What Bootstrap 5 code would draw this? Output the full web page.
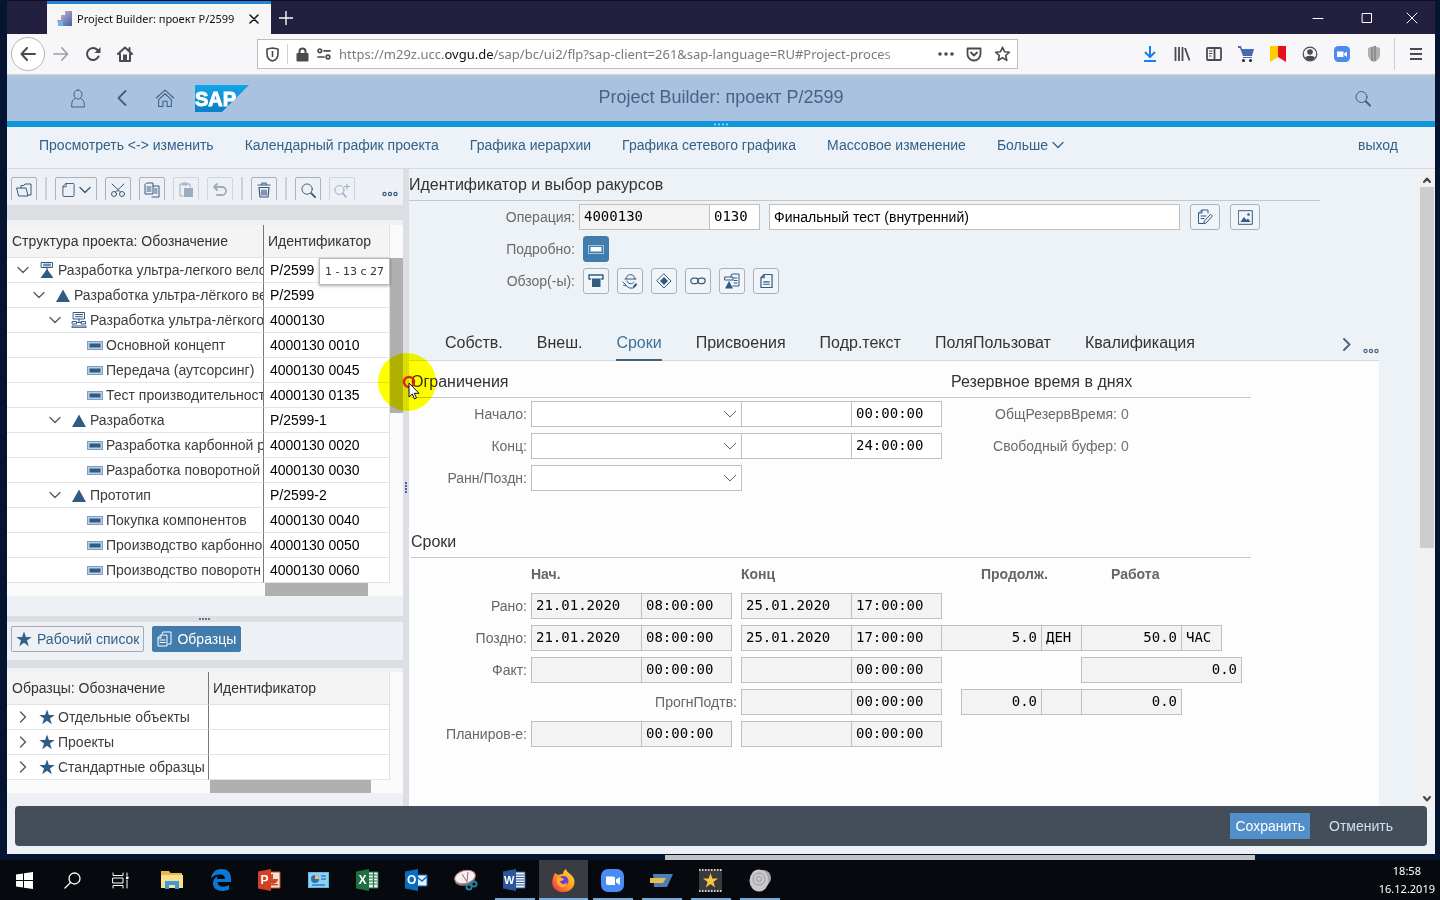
<!DOCTYPE html>
<html lang="ru">
<head>
<meta charset="utf-8">
<meta name="viewport" content="width=device-width, initial-scale=1">
<title>Project Builder: проект P/2599</title>
<link href="https://cdn.jsdelivr.net/npm/bootstrap@5.3.0/dist/css/bootstrap.min.css" rel="stylesheet">
<style>
  :root { --sap-ink: #346187; --sap-navy: #2f5b85; --sap-line: #bfbfbf; --chrome-font: "Noto Sans", "Open Sans", sans-serif; }
  body { font-family: "Liberation Sans", Arial, sans-serif; font-size: 14px; line-height: 20px; color: #333; background: #051430; }
  button, input, select { font-family: inherit; font-size: inherit; line-height: inherit; color: inherit; }
  button { background: none; border: 0; padding: 0; }
  a { text-decoration: none; color: inherit; }
  svg { display: block; flex: none; }
  .ln { fill: none; stroke: currentColor; stroke-linecap: round; stroke-linejoin: round; }

  /* browser window */
  .app-window { margin: 0 5px 6px 7px; background: #edf2f7; min-height: 0; }
  .tab-strip { height: 34px; background: #22203e; border-top: 1px solid #0d0c28; padding-left: 40px; color: #ddd; font-family: var(--chrome-font); }
  .browser-tab { width: 224px; background: #f6f6f7; border-top: 3px solid #2384d8; color: #111; font-size: 11px; padding: 0 12px 0 10px; }
  .tool-strip { height: 41px; background: #f7f6f8; color: #4a4a4f; border-bottom: 1px solid #d5d5d8; }
  .nav-round { width: 34px; height: 34px; border: 1px solid #b5b5b8; border-radius: 50%; background: #fff; }
  .url-box { width: 761px; height: 30px; border: 1px solid #bfbdc1; background: #fff; font-family: var(--chrome-font); font-size: 13px; padding: 0 6px 0 8px; }
  .url-text { color: #7a7a7e; white-space: nowrap; -webkit-mask-image: linear-gradient(90deg, #000 94%, transparent); mask-image: linear-gradient(90deg, #000 94%, transparent); }
  .url-text b { color: #111; font-weight: 400; }
  .tool-icons { padding-right: 12px; }
  .burger { border-left: 1px solid #cfcfd2; height: 32px; padding-left: 14px; margin-left: -4px; }

  /* shell */
  .shell { height: 46px; background: linear-gradient(#b3c4d6, #a9c2df 5px); color: #3b6187; }
  .shell h1 { font-size: 18px; line-height: 24px; margin: 0; padding-bottom: 2px; font-weight: 400; color: #446488; }
  .shell-line { height: 6px; background: #0d97d8; color: #7fd6fa; }
  .menu-strip { height: 42px; background: #ecf2f8; border-bottom: 1px solid #d3d9df; color: var(--sap-ink); padding: 0 37px 5px 32px; }
  .menu-links { gap: 31px; }

  /* navigation pane */
  .work { min-height: 0; }
  .side { width: 396px; background: #edf1f6; }
  .split-v { width: 6px; background: #dbdee2; color: #4a5f9a; }
  .tb { height: 31px; padding: 8px 5px 0 4px; overflow: hidden; color: #37597c; }
  .tb button, .sq { width: 26px; height: 26px; border: 1px solid #a9b1ba; border-radius: 2px; display: flex; align-items: center; justify-content: center; flex: none; }
  .sq { color: var(--sap-navy); border-radius: 3px; background: #f2f5f8; }
  .sq.wide { width: 30px; margin-left: 10px; }
  .sq.on { background: #427cac; border-color: #427cac; color: #fff; }
  .tb .duo { width: 42px; gap: 4px; }
  .tb .off { opacity: .45; }
  .tb .bar { width: 2px; height: 26px; background: #ccd1d7; flex: none; }
  .tb .more { border: 0; width: 16px; }
  .band { background: #dcdee1; }
  .band.tall { height: 15px; margin: 5px 0; }
  .tree { table-layout: fixed; border-collapse: separate; border-spacing: 0; width: 383px; background: #fff; }
  .tree th { height: 33px; font-weight: 400; background: #f4f4f4; border-bottom: 1px solid #e2e2e2; padding: 0 4px 0 5px; white-space: nowrap; }
  .tree th:last-child { padding-left: 4px; }
  .tree td { height: 25px; padding: 0; border-bottom: 1px solid #e4e4e4; white-space: nowrap; overflow: hidden; }
  .tree th:first-child, .tree td:first-child { border-right: 1px solid #777; }
  .tree th:last-child, .tree td:last-child { border-right: 1px solid #e0e0e0; }
  .tree td:last-child { padding-left: 6px; color: #000; }
  .tree .cell { display: flex; align-items: center; overflow: hidden; height: 24px; color: #3c3c3c; }
  .tree .l0 { padding-left: 10px; } .tree .l1 { padding-left: 26px; } .tree .l2 { padding-left: 42px; } .tree .l3 { padding-left: 80px; }
  .tree .chev { margin-right: 10px; color: #4f5b68; }
  .tree .ico { margin-right: 3px; color: var(--sap-navy); }
  .rail { width: 13px; background: #fafafa; padding-top: 33px; }
  .thumb { background: #b0b0b0; }
  .hrow { height: 13px; width: 396px; background: #fbfbfb; }
  .range-tip { left: 312px; top: 33px; width: 71px; height: 27px; background: #fff; border: 1px solid #b9b9b9; box-shadow: 0 1px 3px #0005; font: 11px/25px "DejaVu Sans", sans-serif; text-align: center; color: #333; }
  .side-tabs button { height: 26px; border: 1px solid #a9a9b0; border-radius: 2px; padding: 0 4px; color: var(--sap-ink); display: flex; align-items: center; gap: 5px; }
  .side-tabs .on { background: #427cac; border-color: #427cac; color: #fff; }

  /* form */
  .rowline { height: 32px; display: flex; align-items: center; }
  .ttl { font-size: 16px; line-height: 20px; margin: 0; font-weight: 400; height: 32px; display: flex; align-items: center; border-bottom: 1px solid #c3c6ca; }
  .head-block .ttl { width: 911px; }
  .lbl { color: #6a6a6a; text-align: right; padding-right: 4px; flex: none; white-space: nowrap; }
  .head-block .lbl { width: 170px; }
  .fld { height: 26px; border: 1px solid var(--sap-line); background: #fff; color: #000; padding: 0 4px 2px; font-family: "DejaVu Sans Mono", monospace; border-radius: 0; outline: 0; display: block; margin-right: -1px; flex: none; }
  .fld[readonly] { background: #f3f3f3; }
  .fld.prop { font-family: inherit; padding-bottom: 0; margin: 0 0 0 10px; }
  .num { text-align: right; }
  .w-text { width: 411px; } .w-id { width: 131px; } .w-op { width: 51px; } .w-d { width: 111px; } .w-t { width: 91px; } .w-s { width: 211px; }
  .drop { appearance: none; background: #fff url("data:image/svg+xml,%3Csvg xmlns='http://www.w3.org/2000/svg' width='14' height='8'%3E%3Cpath d='M1 1l6 6 6-6' fill='none' stroke='%23666'/%3E%3C/svg%3E") no-repeat right 4px center; }
  .form-tabs { height: 36px; margin-top: 28px; padding-left: 36px; gap: 34px; font-size: 16px; border-bottom: 1px solid #d5d9de; width: 970px; }
  .form-tabs button { height: 36px; color: #333; border-bottom: 2px solid transparent; padding-top: 2px; }
  .form-tabs .on { color: #3f709e; border-color: #44617e; }
  .tab-more { color: #4a6683; }
  .paper { width: 970px; background: #fdfdfd; padding: 5px 0 0 2px; }
  .paper .lbl { width: 120px; }
  .paper .lbl.far { width: 180px; }
  .group { width: 840px; }
  .group .half { width: 540px; }
  .gap-row { margin-top: 32px; }
  .dates { table-layout: fixed; width: 830px; border-collapse: collapse; }
  .dates td, .dates th { height: 32px; padding: 0; color: #666; }
  .dates .in2 { padding-left: 20px; } .dates .in3 { padding-left: 30px; }
  .dates .fld { width: calc(100% + 1px); }
  .dates .txt { text-align: right; padding-right: 4px; white-space: nowrap; }
  .scroller { width: 16px; background: #f1f1f2; color: #444; }
  .scroller .thumb { width: 14px; height: 361px; background: #cdcdcd; }
  .foot { margin: 0 8px 8px; height: 40px; background: #434e5a; border-radius: 4px; padding-right: 29px; gap: 14px; color: #cfe0ee; }
  .foot button { height: 26px; padding: 0 5px; }
  .foot .save { background: #5190cb; color: #fff; }
  .spot { left: 371px; top: 353px; width: 58px; height: 58px; border-radius: 50%; background: #ff0; mix-blend-mode: multiply; pointer-events: none; }
  .pointer { left: 395px; top: 374px; pointer-events: none; }

  /* task bar */
  .taskbar { height: 40px; background: #06090e; color: #fff; font-family: var(--chrome-font); }
  .apps { padding-left: 3px; }
  .slot { width: 48px; height: 40px; display: flex; align-items: center; justify-content: center; }
  .apps .slot { width: 49px; }
  .slot.run { background: linear-gradient(#76a9dc, #76a9dc) no-repeat center bottom / 40px 2px; }
  .slot.now { background: linear-gradient(#76b0ea, #76b0ea) no-repeat center bottom / 100% 2px #3b3c41; }
  .peek { left: 665px; bottom: 40px; width: 590px; height: 5px; background: #c2c3c8; }
  .clock { font-size: 11px; line-height: 18px; padding-right: 5px; text-align: center; }
</style>
</head>
<body class="vh-100 d-flex flex-column overflow-hidden position-relative">

<svg width="0" height="0" class="position-absolute" aria-hidden="true">
  <symbol id="down" viewBox="0 0 12 8"><path class="ln" stroke-width="1.3" d="M1 1.500l5 5 5-5"/></symbol>
  <symbol id="right" viewBox="0 0 8 12"><path class="ln" stroke-width="1.4" d="M1.500 1l5 5-5 5"/></symbol>
  <symbol id="star" viewBox="0 0 16 16"><path fill="currentColor" d="M8 .5l1.900 5.500h5.800L11 9.400l1.800 5.800L8 11.700l-4.800 3.500L5 9.400.3 6h5.800z"/></symbol>
  <symbol id="tri" viewBox="0 0 14 13"><path fill="currentColor" d="M7 .5L14 13H0z"/></symbol>
  <symbol id="act" viewBox="0 0 16 9"><path fill="#7d9fc0" d="M0 0h16v9H0z"/><path fill="#b9cfe2" d="M1 1h14v7H1z"/><path fill="currentColor" d="M2.500 2.500h11v4h-11z"/></symbol>
  <symbol id="proj" viewBox="0 0 14 16"><path class="ln" d="M1.500.5h11v5h-11zM3.500 2.200h7M3.500 3.800h7M7 6v3"/><path fill="currentColor" d="M7 7l6.500 9H.5z"/></symbol>
  <symbol id="net" viewBox="0 0 16 16"><path class="ln" d="M2.500.5h11v6.500h-11zM4.500 2.500h7M4.500 4.700h7M8 7v2.500M1.500 9.500h4v2.500h-4zM10.500 9.500h4v2.500h-4zM5.500 10.500h5M1 15.300V14h14v1.300z"/></symbol>
  <symbol id="doc" viewBox="0 0 14 16"><path class="ln" d="M4.500 1H12a1 1 0 0 1 1 1v12a1 1 0 0 1-1 1H2a1 1 0 0 1-1-1V4.500zM4.500 1v3.500H1"/></symbol>
  <symbol id="dots3" viewBox="0 0 16 6"><g class="ln" stroke-width="1.2"><circle cx="2.500" cy="3" r="1.600"/><circle cx="8" cy="3" r="1.600"/><circle cx="13.500" cy="3" r="1.600"/></g></symbol>
  <symbol id="lens" viewBox="0 0 16 16"><g class="ln"><circle cx="6.500" cy="6.500" r="5.500"/><path stroke-width="2" d="M11 11l4 4"/></g></symbol>
</svg>

<div class="app-window flex-grow-1 d-flex flex-column position-relative">
  <!-- browser chrome -->
  <div class="tab-strip d-flex">
    <div class="browser-tab d-flex align-items-center">
      <svg width="16" height="16" viewBox="0 0 16 16"><defs><linearGradient id="fav" x2="1" y2="1"><stop stop-color="#f1b6c9"/><stop offset=".5" stop-color="#8e8fc4"/><stop offset="1" stop-color="#3b62a6"/></linearGradient></defs><path fill="url(#fav)" d="M0 9h4V4h4V0h7v15H2z"/><path fill="#6fb4e2" d="M1 10h5v5H1z"/></svg>
      <span class="ms-1 flex-grow-1 text-nowrap">Project Builder: проект P/2599</span>
      <button aria-label="Закрыть вкладку"><svg width="10" height="10" viewBox="0 0 10 10"><path class="ln" stroke-width="1.500" d="M1 1l8 8M9 1l-8 8"/></svg></button>
    </div>
    <button class="ms-2 text-light" aria-label="Новая вкладка"><svg width="14" height="14" viewBox="0 0 14 14"><path class="ln" stroke-width="1.400" d="M7 0v14M0 7h14"/></svg></button>
    <div class="ms-auto d-flex align-items-center text-white gap-4 pe-3">
      <button class="me-2" aria-label="Свернуть"><svg width="14" height="12" viewBox="0 0 14 12"><path class="ln" d="M2 6.500h10"/></svg></button>
      <button class="ms-1 me-2" aria-label="Развернуть"><svg width="12" height="12" viewBox="0 0 12 12"><path class="ln" d="M1.500 1.500h9v9h-9z"/></svg></button>
      <button aria-label="Закрыть"><svg width="14" height="12" viewBox="0 0 14 12"><path class="ln" d="M2 1l10 10M12 1L2 11"/></svg></button>
    </div>
  </div>
  <div class="tool-strip d-flex align-items-center">
    <button class="nav-round d-flex align-items-center justify-content-center ms-1" aria-label="Назад"><svg width="16" height="14" viewBox="0 0 16 14"><path class="ln" stroke-width="2" d="M15 7H1.500M7 1L1.500 7 7 13"/></svg></button>
    <button class="ms-2 opacity-50" aria-label="Вперёд"><svg width="16" height="14" viewBox="0 0 16 14"><path class="ln" stroke-width="1.700" d="M1 7h13.500M9 1l5.500 6L9 13"/></svg></button>
    <button class="ms-3" aria-label="Обновить"><svg width="16" height="16" viewBox="0 0 16 16"><path class="ln" stroke-width="2" d="M13.500 10.500A6 6 0 1 1 12.500 4L14 5.500"/><path fill="currentColor" d="M15.500 1v6h-6z"/></svg></button>
    <button class="ms-3" aria-label="Домой"><svg width="16" height="16" viewBox="0 0 16 16"><path class="ln" stroke-width="2" d="M1 8l7-6.500L15 8M3 8v7h10V8M12.500 2v3"/><path fill="currentColor" d="M6 8.500h4V15H6z"/></svg></button>
    <div class="url-box d-flex align-items-center ms-auto me-auto">
      <svg width="13" height="15" viewBox="0 0 13 15"><path class="ln" stroke-width="1.600" d="M6.500 1L12 2v5c0 4-2 6-5.500 7C3 13 1 11 1 7V2z"/><path fill="currentColor" d="M5.700 4h1.600v6H5.700z"/></svg>
      <span class="vr mx-2 my-1 opacity-25"></span>
      <svg width="13" height="15" viewBox="0 0 13 15"><path class="ln" stroke-width="2" d="M3.500 7V4.500a3 3 0 0 1 6 0V7"/><rect y="6" x=".5" width="12" height="8.500" rx="1" fill="currentColor"/></svg>
      <svg class="ms-2" width="14" height="12" viewBox="0 0 14 12"><g class="ln" stroke-width="1.700"><circle cx="2.800" cy="2.800" r="1.800"/><path d="M7 2.800h6M1 9h6"/><circle cx="11" cy="9" r="1.800"/></g></svg>
      <div class="url-text flex-grow-1 ms-2">https://m29z.ucc.<b>ovgu.de</b>/sap/bc/ui2/flp?sap-client=261&amp;sap-language=RU#Project-proces</div>
      <div class="d-flex align-items-center gap-2 ms-4">
        <svg width="16" height="4" viewBox="0 0 16 4"><g fill="currentColor"><circle cx="2" cy="2" r="1.800"/><circle cx="8" cy="2" r="1.800"/><circle cx="14" cy="2" r="1.800"/></g></svg>
        <svg class="ms-1" width="16" height="15" viewBox="0 0 16 15"><path class="ln" stroke-width="1.800" d="M1.500 1.500h13V7a6.500 6.500 0 0 1-13 0zM5 5.500l3 3 3-3"/></svg>
        <svg class="ms-1" width="17" height="16" viewBox="0 0 16 16"><path class="ln" stroke-width="1.600" d="M8 1.200l2 4.500 4.900.5-3.700 3.300 1.100 4.900L8 11.800l-4.300 2.600 1.100-4.900L1.100 6.200 6 5.700z"/></svg>
      </div>
    </div>
    <div class="tool-icons d-flex align-items-center gap-3">
      <svg width="16" height="16" viewBox="0 0 16 16"><path fill="none" stroke="#1a7fe8" stroke-width="2" d="M8 0v10M3 6l5 5 5-5M2 15h12"/></svg>
      <svg width="16" height="16" viewBox="0 0 16 16"><path fill="none" stroke="currentColor" stroke-width="1.800" d="M1.500 1v14M5 1v14M8.500 1v14M11 2l4.500 12.500"/></svg>
      <svg width="16" height="16" viewBox="0 0 16 16"><path class="ln" stroke-width="1.800" d="M2 2h12a1 1 0 0 1 1 1v10a1 1 0 0 1-1 1H2a1 1 0 0 1-1-1V3a1 1 0 0 1 1-1zM8.500 2v12"/><path class="ln" d="M3.500 5H6M3.500 7.500H6M3.500 10H5"/></svg>
      <svg width="16" height="16" viewBox="0 0 16 16"><path fill="#4668ae" d="M0 0h3l1 3h12l-2 7H5L2 2H0z"/><path stroke="#4668ae" d="M5 11.500h9"/><circle cx="5.500" cy="14.500" r="1.500" fill="#222"/><circle cx="12.500" cy="14.500" r="1.500" fill="#222"/></svg>
      <svg width="16" height="16" viewBox="0 0 16 16"><path fill="#fc0" d="M0 0h8v11l-8 5z"/><path fill="#e8101c" d="M8 0h8v16l-8-5z"/></svg>
      <svg width="16" height="16" viewBox="0 0 16 16"><circle cx="8" cy="8" r="6.800" fill="none" stroke="currentColor" stroke-width="1.200"/><circle cx="8" cy="6" r="2.800" fill="currentColor"/><path fill="currentColor" d="M3 12c1-3 9-3 10 0-2 3-8 3-10 0z"/></svg>
      <svg width="16" height="16" viewBox="0 0 16 16"><rect width="16" height="16" rx="4.500" fill="#4a8cf0"/><path fill="#fff" d="M3 5.500h6.500v5.500H3zM10 7.500l3-2v5.500l-3-2z"/></svg>
      <svg width="16" height="16" viewBox="0 0 16 16"><path fill="#b0b0b0" d="M8 0l6 2v6c0 4-2 6-6 8-4-2-6-4-6-8V2z"/><path fill="#8d8d8d" d="M5 1h2v14H5zM8 0h2v15H8z"/></svg>
      <button class="burger" aria-label="Меню"><svg width="14" height="14" viewBox="0 0 14 14"><path stroke="currentColor" stroke-width="2" d="M1 2h12M1 7h12M1 12h12"/></svg></button>
    </div>
  </div>

  <!-- shell header -->
  <header class="shell d-flex align-items-center position-relative ps-5">
    <button class="ms-3" aria-label="Пользователь"><svg width="14" height="19" viewBox="0 0 14 19"><path class="ln" d="M7 1a4 4 0 0 1 4 4.500C11 8 9 10 7 10S3 8 3 5.500A4 4 0 0 1 7 1zM4 9.500c-2 1-3.300 3-3.300 6V18h12.600v-2.500c0-3-1.300-5-3.300-6"/></svg></button>
    <button class="ms-4 ps-2" aria-label="Назад"><svg width="10" height="16" viewBox="0 0 10 16"><path class="ln" stroke-width="1.800" d="M8.500 1L1.500 8l7 7"/></svg></button>
    <button class="ms-4 ps-1" aria-label="Главная"><svg width="20" height="18" viewBox="0 0 18 17"><path class="ln" d="M.7 8.500L9 1l8.300 7.500M3 10l6-5.500 6 5.500v6.500h-4v-5H7v5H3z"/></svg></button>
    <a href="#" class="ms-3 ps-1" aria-label="SAP"><svg width="54" height="27" viewBox="0 0 54 27"><defs><linearGradient id="sg" x2="0" y2="1"><stop stop-color="#12a5e6"/><stop offset="1" stop-color="#0a80c8"/></linearGradient></defs><path fill="url(#sg)" d="M0 0h54L27 27H0z"/><text x="0" y="21" font-family="Liberation Sans, Arial, sans-serif" font-weight="700" font-size="20" fill="#fff" stroke="#fff">SAP</text></svg></a>
    <h1 class="position-absolute start-50 translate-middle-x">Project Builder: проект P/2599</h1>
    <button class="ms-auto me-5 pe-3" aria-label="Поиск"><svg width="16" height="17"><use href="#lens"/></svg></button>
  </header>
  <div class="shell-line d-flex justify-content-center align-items-center"><svg width="14" height="3" viewBox="0 0 14 3"><path stroke="currentColor" stroke-width="2" stroke-dasharray="2 2" d="M0 1.500h14"/></svg></div>
  <nav class="menu-strip d-flex align-items-center text-nowrap">
    <div class="menu-links d-flex align-items-center flex-grow-1">
      <a href="#">Просмотреть &lt;-&gt; изменить</a><a href="#">Календарный график проекта</a><a href="#">Графика иерархии</a><a href="#">Графика сетевого графика</a><a href="#">Массовое изменение</a>
      <a href="#" class="d-flex align-items-center gap-1">Больше <svg width="12" height="8"><use href="#down"/></svg></a>
    </div>
    <a href="#">выход</a>
  </nav>

  <div class="work d-flex flex-grow-1">
    <!-- project structure -->
    <aside class="side flex-shrink-0">
      <div class="tb d-flex gap-2">
        <button aria-label="Открыть"><svg width="16" height="14" viewBox="0 0 16 14"><path class="ln" d="M1 5h9l2 8H3zM5 5V2.500h3l1-1.500h6v11h-3"/></svg></button>
        <span class="bar"></span>
        <button class="duo" aria-label="Создать"><svg width="13" height="16"><use href="#doc"/></svg><svg width="12" height="8"><use href="#down"/></svg></button>
        <button aria-label="Вырезать"><svg width="16" height="16" viewBox="0 0 16 16"><g class="ln"><circle cx="4" cy="12" r="2.500"/><circle cx="12" cy="12" r="2.500"/><path d="M5.500 10L14 2M10.500 10L2 2M8 9h.1"/></g></svg></button>
        <button aria-label="Копировать"><svg width="16" height="16" viewBox="0 0 16 16"><path class="ln" d="M3 1h6v11H1V3zM9 4h6v11H8M3 5h4M3 7h4M3 9h4M10.500 7H13M10.500 9H13M10.500 11H13"/></svg></button>
        <button class="off" aria-label="Вставить"><svg width="16" height="16" viewBox="0 0 16 16"><path class="ln" d="M5 14H2V2h10v3M5 1h4v2H5z"/><path fill="currentColor" d="M6 6h9v9H6z"/></svg></button>
        <button class="off" aria-label="Отменить"><svg width="16" height="14" viewBox="0 0 16 14"><path class="ln" stroke-width="1.800" d="M5 1L2 4l3 3M2 4h8a4 4 0 0 1 0 8H5"/></svg></button>
        <span class="bar"></span>
        <button aria-label="Удалить"><svg width="14" height="16" viewBox="0 0 14 16"><path class="ln" stroke-width="1.200" d="M1 3h12M5 3V1h4v2M2 5.500L3 15h8l1-9.500zM5 8v5M7 8v5M9 8v5"/></svg></button>
        <span class="bar"></span>
        <button aria-label="Найти"><svg width="15" height="15"><use href="#lens"/></svg></button>
        <button class="off" aria-label="Найти далее"><svg width="16" height="15" viewBox="0 0 16 15"><g class="ln"><circle cx="5.500" cy="7" r="4.500"/><path stroke-width="1.500" d="M9 10.500l3 3.500"/><path d="M13 1v5M10.500 3.500h5"/></g></svg></button>
        <button class="more ms-auto" aria-label="Ещё"><svg class="mt-2" width="16" height="6"><use href="#dots3"/></svg></button>
      </div>
      <div class="band tall"></div>
      <div class="d-flex position-relative">
        <table class="tree">
          <colgroup><col style="width:257px"><col></colgroup>
          <thead><tr><th>Структура проекта: Обозначение</th><th>Идентификатор</th></tr></thead>
          <tbody>
            <tr><td><div class="cell l0"><svg class="chev" width="12" height="8"><use href="#down"/></svg><svg class="ico" width="16" height="16"><use href="#proj"/></svg>Разработка ультра-легкого вело</div></td><td>P/2599</td></tr>
            <tr><td><div class="cell l1"><svg class="chev" width="12" height="8"><use href="#down"/></svg><svg class="ico" width="16" height="13"><use href="#tri"/></svg>Разработка ультра-лёгкого ве</div></td><td>P/2599</td></tr>
            <tr><td><div class="cell l2"><svg class="chev" width="12" height="8"><use href="#down"/></svg><svg class="ico" width="16" height="16"><use href="#net"/></svg>Разработка ультра-лёгкого</div></td><td>4000130</td></tr>
            <tr><td><div class="cell l3"><svg class="ico" width="16" height="9"><use href="#act"/></svg>Основной концепт</div></td><td>4000130 0010</td></tr>
            <tr><td><div class="cell l3"><svg class="ico" width="16" height="9"><use href="#act"/></svg>Передача (аутсорсинг)</div></td><td>4000130 0045</td></tr>
            <tr><td><div class="cell l3"><svg class="ico" width="16" height="9"><use href="#act"/></svg>Тест производительност</div></td><td>4000130 0135</td></tr>
            <tr><td><div class="cell l2"><svg class="chev" width="12" height="8"><use href="#down"/></svg><svg class="ico" width="16" height="13"><use href="#tri"/></svg>Разработка</div></td><td>P/2599-1</td></tr>
            <tr><td><div class="cell l3"><svg class="ico" width="16" height="9"><use href="#act"/></svg>Разработка карбонной р</div></td><td>4000130 0020</td></tr>
            <tr><td><div class="cell l3"><svg class="ico" width="16" height="9"><use href="#act"/></svg>Разработка поворотной</div></td><td>4000130 0030</td></tr>
            <tr><td><div class="cell l2"><svg class="chev" width="12" height="8"><use href="#down"/></svg><svg class="ico" width="16" height="13"><use href="#tri"/></svg>Прототип</div></td><td>P/2599-2</td></tr>
            <tr><td><div class="cell l3"><svg class="ico" width="16" height="9"><use href="#act"/></svg>Покупка компонентов</div></td><td>4000130 0040</td></tr>
            <tr><td><div class="cell l3"><svg class="ico" width="16" height="9"><use href="#act"/></svg>Производство карбонно</div></td><td>4000130 0050</td></tr>
            <tr><td><div class="cell l3"><svg class="ico" width="16" height="9"><use href="#act"/></svg>Производство поворотн</div></td><td>4000130 0060</td></tr>
          </tbody>
        </table>
        <div class="rail"><div class="thumb" style="height:155px"></div></div>
        <div class="range-tip position-absolute">1 - 13 с 27</div>
      </div>
      <div class="hrow"><div class="thumb h-100" style="width:103px;margin-left:258px"></div></div>
      <div style="height:20px"></div>
      <div class="band d-flex justify-content-center align-items-center text-secondary" style="height:6px"><svg width="12" height="2" viewBox="0 0 12 2"><path stroke="currentColor" stroke-width="2" stroke-dasharray="2 1" d="M0 1h12"/></svg></div>
      <div class="side-tabs d-flex gap-2 px-1 pt-1 pb-2">
        <button><svg width="16" height="16"><use href="#star"/></svg>Рабочий список</button>
        <button class="on"><svg width="15" height="16" viewBox="0 0 15 16"><path class="ln" d="M4 4h6v11H1V7zM4 4v3H1M5 3l1-2h8v12h-3M3 9h5M3 11.500h5"/></svg>Образцы</button>
      </div>
      <div class="band" style="height:8px"></div>
      <div class="d-flex mt-1">
        <table class="tree">
          <colgroup><col style="width:202px"><col></colgroup>
          <thead><tr><th>Образцы: Обозначение</th><th>Идентификатор</th></tr></thead>
          <tbody>
            <tr><td><div class="cell l0"><svg class="chev" width="12" height="12"><use href="#right"/></svg><svg class="ico" width="16" height="16"><use href="#star"/></svg>Отдельные объекты</div></td><td></td></tr>
            <tr><td><div class="cell l0"><svg class="chev" width="12" height="12"><use href="#right"/></svg><svg class="ico" width="16" height="16"><use href="#star"/></svg>Проекты</div></td><td></td></tr>
            <tr><td><div class="cell l0"><svg class="chev" width="12" height="12"><use href="#right"/></svg><svg class="ico" width="16" height="16"><use href="#star"/></svg>Стандартные образцы</div></td><td></td></tr>
          </tbody>
        </table>
        <div class="rail"></div>
      </div>
      <div class="hrow"><div class="thumb h-100" style="width:161px;margin-left:203px"></div></div>
    </aside>
    <div class="split-v d-flex align-items-center justify-content-center"><svg width="2" height="12" viewBox="0 0 2 12"><path stroke="currentColor" stroke-width="2" stroke-dasharray="2 1" d="M1 0v12"/></svg></div>

    <!-- activity form -->
    <main class="flex-grow-1 d-flex flex-column overflow-hidden">
      <section class="head-block">
        <h2 class="ttl">Идентификатор и выбор ракурсов</h2>
        <div class="rowline"><label class="lbl" for="op">Операция:</label><input id="op" class="fld w-id" value="4000130" readonly><input class="fld w-op" value="0130" aria-label="Номер операции"><input class="fld prop w-text" value="Финальный тест (внутренний)" aria-label="Название">
          <button class="sq wide" aria-label="Изменить текст"><svg width="16" height="16" viewBox="0 0 16 16"><path class="ln" d="M6 14.500H1.500V4L5 1h6v3M5 1v3H1.500M4 7h5M4 9.500h3"/><path class="ln" d="M14 5.500l1.500 1.500L9 14l-2.500.8.800-2.500z"/></svg></button>
          <button class="sq wide" aria-label="Изображение"><svg width="15" height="15" viewBox="0 0 15 15"><path class="ln" d="M.7.7h13.600v13.600H.7z"/><path fill="currentColor" d="M2.500 12l3.500-5 2.500 3 1.500-1.500 2.500 3.500z"/><circle cx="10.500" cy="4.500" r="1.300" fill="currentColor"/></svg></button>
        </div>
        <div class="rowline"><span class="lbl">Подробно:</span><button class="sq on ms-1" aria-label="Операция"><svg width="16" height="9" viewBox="0 0 16 9"><path fill="#9fc3e3" d="M0 0h16v9H0z"/><path fill="#427cac" d="M1 1h14v7H1z"/><path fill="#fff" d="M2.500 2h11v4.500h-11z"/></svg></button></div>
        <div class="rowline"><span class="lbl">Обзор(-ы):</span><div class="d-flex gap-2 ms-1">
          <button class="sq" aria-label="Подоперации"><svg width="16" height="14" viewBox="0 0 16 14"><path class="ln" stroke-width="1.400" d="M2.500 5H1V1h14v4h-1.500"/><path fill="currentColor" d="M4 4.500h8.500V13H4z"/></svg></button>
          <button class="sq" aria-label="Компоненты"><svg width="16" height="16" viewBox="0 0 16 16"><path class="ln" d="M3 6h11M4 6c0-6 9-6 9 0M5 8c0 3 6 4 7 1M1 9l3 3M1.500 12l3 1 3 2h4l3-4"/><path fill="currentColor" d="M11 13l3-3 1 2-3 3z"/></svg></button>
          <button class="sq" aria-label="Вехи"><svg width="16" height="16" viewBox="0 0 16 16"><path class="ln" d="M8 1l7 7-7 7-7-7z"/><path fill="currentColor" d="M8 4l4 4-4 4-4-4z"/></svg></button>
          <button class="sq" aria-label="Связи"><svg width="16" height="8" viewBox="0 0 16 8"><g class="ln" stroke-width="1.200"><rect x=".8" y="1.200" width="7.500" height="5.500" rx="2.700"/><rect x="7.700" y="1.200" width="7.500" height="5.500" rx="2.700"/></g></svg></button>
          <button class="sq" aria-label="Документы проекта"><svg width="16" height="16" viewBox="0 0 16 16"><path class="ln" d="M1 4h8v3H1zM7 4V2l1-1h7v12H9M10 5h3M10 7.500h3M10 10h3"/><path fill="currentColor" d="M5 8l4 7.500H1z"/></svg></button>
          <button class="sq" aria-label="Документ"><svg width="13" height="16" viewBox="0 0 14 16"><path class="ln" stroke-width="1.300" d="M4.500 1H13v14H1V4.500zM4.500 1v3.500H1M4 9h6M4 11.500h6"/></svg></button>
        </div></div>
        <div class="form-tabs d-flex text-nowrap" role="tablist">
          <button role="tab">Собств.</button><button role="tab">Внеш.</button><button role="tab" class="on" aria-selected="true">Сроки</button><button role="tab">Присвоения</button><button role="tab">Подр.текст</button><button role="tab">ПоляПользоват</button><button role="tab">Квалификация</button>
          <span class="tab-more ms-auto d-flex align-items-center gap-2"><svg class="mt-1 me-1" width="8" height="13" viewBox="0 0 8 13"><path class="ln" stroke-width="1.900" d="M1 1l5.500 5.500L1 12"/></svg><svg class="mt-3" width="16" height="6"><use href="#dots3"/></svg></span>
        </div>
      </section>
      <section class="paper flex-grow-1">
        <div class="group">
          <div class="ttl"><h2 class="ttl half border-0">Ограничения</h2><h2 class="ttl border-0">Резервное время в днях</h2></div>
          <div class="rowline"><label class="lbl" for="c1">Начало:</label><select id="c1" class="fld drop w-s"><option></option></select><input class="fld w-d" aria-label="Дата начала"><input class="fld w-t" value="00:00:00" aria-label="Время начала"><span class="lbl far">ОбщРезервВремя:</span><span class="text-secondary">0</span></div>
          <div class="rowline"><label class="lbl" for="c2">Конц:</label><select id="c2" class="fld drop w-s"><option></option></select><input class="fld w-d" aria-label="Дата конца"><input class="fld w-t" value="24:00:00" aria-label="Время конца"><span class="lbl far">Свободный буфер:</span><span class="text-secondary">0</span></div>
          <div class="rowline"><label class="lbl" for="c3">Ранн/Поздн:</label><select id="c3" class="fld drop w-s"><option></option></select></div>
          <h2 class="ttl gap-row">Сроки</h2>
          <table class="dates">
            <colgroup><col style="width:120px"><col style="width:110px"><col style="width:90px"><col style="width:10px"><col style="width:110px"><col style="width:90px"><col style="width:20px"><col style="width:80px"><col style="width:40px"><col style="width:100px"><col style="width:40px"><col style="width:20px"></colgroup>
            <thead><tr><th></th><th colspan="3">Нач.</th><th colspan="3">Конц</th><th colspan="2" class="in2">Продолж.</th><th colspan="3" class="in3">Работа</th></tr></thead>
            <tbody>
              <tr><td class="txt">Рано:</td><td><input class="fld" readonly value="21.01.2020" aria-label="Рано, начало, дата"></td><td><input class="fld" readonly value="08:00:00" aria-label="Рано, начало, время"></td><td></td><td><input class="fld" readonly value="25.01.2020" aria-label="Рано, конец, дата"></td><td><input class="fld" readonly value="17:00:00" aria-label="Рано, конец, время"></td><td colspan="6"></td></tr>
              <tr><td class="txt">Поздно:</td><td><input class="fld" readonly value="21.01.2020" aria-label="Поздно, начало, дата"></td><td><input class="fld" readonly value="08:00:00" aria-label="Поздно, начало, время"></td><td></td><td><input class="fld" readonly value="25.01.2020" aria-label="Поздно, конец, дата"></td><td><input class="fld" readonly value="17:00:00" aria-label="Поздно, конец, время"></td><td colspan="2"><input class="fld num" readonly value="5.0" aria-label="Продолжительность"></td><td><input class="fld" readonly value="ДЕН" aria-label="Единица продолжительности"></td><td><input class="fld num" readonly value="50.0" aria-label="Работа"></td><td><input class="fld" readonly value="ЧАС" aria-label="Единица работы"></td><td></td></tr>
              <tr><td class="txt">Факт:</td><td><input class="fld" readonly aria-label="Факт, начало, дата"></td><td><input class="fld" readonly value="00:00:00" aria-label="Факт, начало, время"></td><td></td><td><input class="fld" readonly aria-label="Факт, конец, дата"></td><td><input class="fld" readonly value="00:00:00" aria-label="Факт, конец, время"></td><td colspan="3"></td><td colspan="3"><input class="fld num" readonly value="0.0" aria-label="Факт, работа"></td></tr>
              <tr><td class="txt" colspan="4">ПрогнПодтв:</td><td><input class="fld" readonly aria-label="Прогноз, дата"></td><td><input class="fld" readonly value="00:00:00" aria-label="Прогноз, время"></td><td></td><td><input class="fld num" readonly value="0.0" aria-label="Прогноз, продолжительность"></td><td><input class="fld" readonly aria-label="Прогноз, единица"></td><td><input class="fld num" readonly value="0.0" aria-label="Прогноз, работа"></td><td colspan="2"></td></tr>
              <tr><td class="txt">Планиров-е:</td><td><input class="fld" readonly aria-label="План, начало, дата"></td><td><input class="fld" readonly value="00:00:00" aria-label="План, начало, время"></td><td></td><td><input class="fld" readonly aria-label="План, конец, дата"></td><td><input class="fld" readonly value="00:00:00" aria-label="План, конец, время"></td><td colspan="6"></td></tr>
            </tbody>
          </table>
        </div>
      </section>
    </main>
    <div class="scroller d-flex flex-column align-items-center py-1">
      <svg class="mt-1 mb-1" width="8" height="6" viewBox="0 0 8 6"><path class="ln" stroke-width="2" d="M1 5l3-3.500L7 5"/></svg>
      <div class="thumb"></div>
      <svg class="mt-auto" width="8" height="6" viewBox="0 0 8 6"><path class="ln" stroke-width="2" d="M1 1l3 3.500L7 1"/></svg>
    </div>
  </div>

  <footer class="foot d-flex align-items-center justify-content-end">
    <button class="save">Сохранить</button><button>Отменить</button>
  </footer>
  <div class="position-absolute spot"></div>
  <svg class="position-absolute pointer" aria-hidden="true" width="20" height="28" viewBox="0 0 20 28"><circle cx="7" cy="8" r="5" fill="none" stroke="#e2231a" stroke-width="2.500"/><path fill="#fff" stroke="#111" d="M7 9v14l3.300-3 2.200 5 2-1-2.200-4.700H17z"/></svg>
</div>

<div class="peek position-absolute"></div>
<div class="taskbar d-flex align-items-center">
  <button class="slot" aria-label="Пуск"><svg width="17" height="17" viewBox="0 0 17 17"><path fill="#fff" d="M0 2.500L7 1.500V8H0zM8 1.300L17 0v8H8zM0 9h7v6.500L0 14.500zM8 9h9v8l-9-1.300z"/></svg></button>
  <button class="slot" aria-label="Поиск"><svg width="17" height="17" viewBox="0 0 17 17"><g class="ln" stroke-width="1.300"><circle cx="10.500" cy="6.500" r="5.500"/><path d="M6.500 10.500L1 16"/></g></svg></button>
  <button class="slot" aria-label="Просмотр задач"><svg width="17" height="17" viewBox="0 0 17 17"><path class="ln" d="M1 1v2.500h10V1M1 6h10v5H1zM1 16v-2.500h10V16M15 1v2.500M15 8v8"/><path fill="#fff" d="M14 4.500h2.500V7H14z"/></svg></button>
  <div class="apps d-flex">
  <button class="slot" aria-label="Проводник"><svg width="22" height="18" viewBox="0 0 22 18"><path fill="#e8b84b" d="M0 0h8l1.500 2H21v15H0z"/><path fill="#fbdf8c" d="M0 4h22v13H0z"/><path fill="#3a9bdc" d="M4 10h14v8h-4v-4H8v4H4z"/></svg></button>
  <button class="slot" aria-label="Edge"><svg width="20" height="22" viewBox="0 0 20 22"><path fill="#0c78d6" d="M0 9.500C1 3 5 0 10.500 0 17 0 20 4 20 9.500V13H6.500c0 5 6.500 6 11.500 3v4.500C10 24 2 21 2 14.500c0-4 2-6 5-7.500-1 1-1 2-1 3h8c0-3-1.500-4.500-5-4.500C5 5.500 2 7 0 9.500z"/></svg></button>
  <button class="slot" aria-label="PowerPoint"><svg width="23" height="22" viewBox="0 0 23 22"><path fill="#f3e4e0" stroke="#d24726" d="M11 3h11v16H11z"/><path fill="#d24726" d="M15 5v5h5a5 5 0 0 1-10 0 5 5 0 0 1 5-5zM12 15h8v1.500h-8z"/><path fill="#d04125" d="M0 2.500L13 0v22L0 19.500z"/><text x="2.500" y="15" font-size="12" font-weight="700" fill="#fff" font-family="Liberation Sans">P</text></svg></button>
  <button class="slot" aria-label="Панель управления"><svg width="21" height="16" viewBox="0 0 21 16"><path fill="#5db7ea" d="M0 0h21v16H0z"/><path fill="#8fd0f5" d="M1 1h19v14H1z"/><circle cx="7" cy="7" r="4" fill="#2b6fb5"/><path fill="#ffc341" d="M7 3a4 4 0 0 1 4 4H7z"/><path stroke="#2f7fc0" stroke-width="1.500" d="M13 4h5M13 7h5M4 13h13"/></svg></button>
  <button class="slot" aria-label="Excel"><svg width="23" height="22" viewBox="0 0 23 22"><path fill="#e9f3ed" stroke="#217346" d="M11 3h11v16H11z"/><path stroke="#217346" stroke-width="1.200" d="M12 6h9M12 9h9M12 12h9M12 15h9M17.500 3v16"/><path fill="#1e6f42" d="M0 2.500L13 0v22L0 19.500z"/><text x="2.500" y="15" font-size="12" font-weight="700" fill="#fff" font-family="Liberation Sans">X</text></svg></button>
  <button class="slot" aria-label="Outlook"><svg width="23" height="22" viewBox="0 0 23 22"><path fill="#e9f2fa" stroke="#0a6fc2" d="M10 6h12v11H10z"/><path fill="none" stroke="#0a6fc2" stroke-width="1.500" d="M12 8l5 4 5-4.500"/><path fill="#0b6cbd" d="M0 2.500L13 0v22L0 19.500z"/><text x="2" y="15" font-size="12" font-weight="700" fill="#fff" font-family="Liberation Sans">O</text></svg></button>
  <button class="slot" aria-label="Ножницы"><svg width="24" height="22" viewBox="0 0 24 22"><ellipse cx="11" cy="10" rx="10.500" ry="6.500" fill="#8b7478" transform="rotate(-15 11 10)"/><ellipse cx="11" cy="8" rx="10.500" ry="6.500" fill="#f4eff0" stroke="#b5787f" transform="rotate(-15 11 8)"/><path stroke="#9c6670" fill="none" d="M8 5l5 8M14 3l-1 9"/><g fill="none" stroke="#2a7f9d" stroke-width="2"><circle cx="15" cy="18" r="2.500"/><circle cx="20" cy="15" r="2.500"/></g></svg></button>
  <button class="slot run" aria-label="Word"><svg width="23" height="22" viewBox="0 0 23 22"><path fill="#eef2f9" stroke="#2b579a" d="M11 3h11v16H11z"/><path stroke="#2b579a" stroke-width="1.200" d="M13 6h8M13 8.500h8M13 11h8M13 13.500h8M13 16h8"/><path fill="#2b579a" d="M0 2.500L13 0v22L0 19.500z"/><text x="1" y="15" font-size="11" font-weight="700" fill="#fff" font-family="Liberation Sans">W</text></svg></button>
  <button class="slot now" aria-label="Firefox"><svg width="23" height="23" viewBox="0 0 23 23"><defs><linearGradient id="ff" x1="1" x2="0" y2="1"><stop stop-color="#ffe53b"/><stop offset=".5" stop-color="#ff9a1f"/><stop offset="1" stop-color="#ee1f5c"/></linearGradient></defs><path fill="url(#ff)" d="M3 4l3 2c2-1 4-1 5-1 0-2 1-4 3-5 0 3 6 5 8 10 2 7-3 13-10.500 13S-1 18 .5 11C1 8 2 6 3 4z"/><circle cx="11.500" cy="12" r="5" fill="#6d3fd0"/><path fill="#ffb02a" d="M5 9c3-1 5 0 7 1-1 2-3 2-4 2 1 4 5 4 7 1 0 4-4 7-8 4-2-2-3-5-2-8z"/></svg></button>
  <button class="slot run" aria-label="Zoom"><svg width="23" height="23" viewBox="0 0 23 23"><rect width="23" height="23" rx="7" fill="#4a8cf5"/><path fill="#fff" d="M5 7.500h7q2 0 2 2V16H7q-2 0-2-2zM15 10.500L19 8v8l-4-2.500z"/></svg></button>
  <button class="slot run" aria-label="SAP Logon"><svg width="23" height="13" viewBox="0 0 23 13"><path fill="#4c7db5" d="M3 0h20l-6 13H4z"/><path fill="#e9bd4d" d="M0 4h16l-3 5H0z"/></svg></button>
  <button class="slot run" aria-label="Медиа"><svg width="23" height="23" viewBox="0 0 23 23"><path fill="#3b3a3d" d="M0 0h23v23H0z"/><path stroke="#fff" stroke-width="1.500" stroke-dasharray="1.500 1.500" d="M0 1h23M0 22h23"/><path fill="#f6c743" d="M11.500 4l1.800 5.500h5.700l-4.600 3.400 1.800 5.600-4.700-3.500L6.800 18.500l1.800-5.600L4 9.500h5.700z"/></svg></button>
  <button class="slot run" aria-label="Диск"><svg width="22" height="23" viewBox="0 0 22 23"><circle cx="14" cy="9" r="8" fill="#a5a5a9"/><ellipse cx="10" cy="11.500" rx="9.500" ry="11" fill="#c9c9cc"/><g fill="none" stroke="#9b9ba0"><circle cx="10" cy="10" r="6"/><circle cx="10" cy="10" r="2.500"/></g></svg></button>
  </div>
  <div class="clock ms-auto">18:58<br>16.12.2019</div>
</div>
<script src="https://cdn.jsdelivr.net/npm/bootstrap@5.3.0/dist/js/bootstrap.bundle.min.js"></script>
</body>
</html>
